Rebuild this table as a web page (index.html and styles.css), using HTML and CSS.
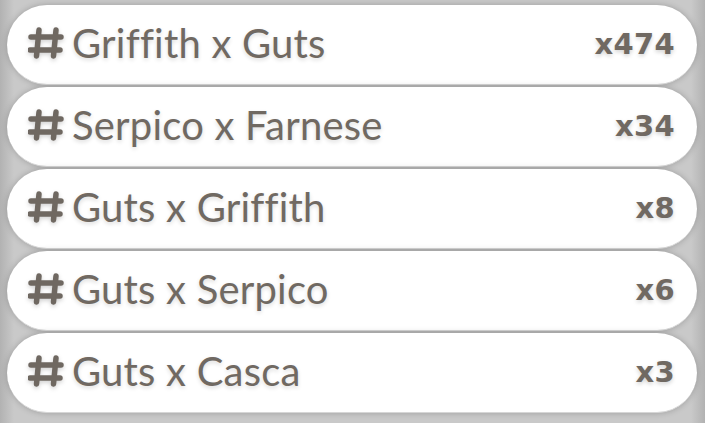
FILE: index.html
```html
<!DOCTYPE html>
<html>
<head>
<meta charset="utf-8">
<link rel="stylesheet" href="styles.css">
</head>
<body>
<ul class="tags">
  <li class="tag">
    <span class="name"><svg class="hash" viewBox="0 0 36 32"><path d="M11 3 L8.5 29 M28 3 L25.5 29 M3 10 L33 10 M2 23 L32 23"/></svg>Griffith x Guts</span>
    <span class="count">x474</span>
  </li>
  <li class="tag">
    <span class="name"><svg class="hash" viewBox="0 0 36 32"><path d="M11 3 L8.5 29 M28 3 L25.5 29 M3 10 L33 10 M2 23 L32 23"/></svg>Serpico x Farnese</span>
    <span class="count">x34</span>
  </li>
  <li class="tag">
    <span class="name"><svg class="hash" viewBox="0 0 36 32"><path d="M11 3 L8.5 29 M28 3 L25.5 29 M3 10 L33 10 M2 23 L32 23"/></svg>Guts x Griffith</span>
    <span class="count">x8</span>
  </li>
  <li class="tag">
    <span class="name"><svg class="hash" viewBox="0 0 36 32"><path d="M11 3 L8.5 29 M28 3 L25.5 29 M3 10 L33 10 M2 23 L32 23"/></svg>Guts x Serpico</span>
    <span class="count">x6</span>
  </li>
  <li class="tag">
    <span class="name"><svg class="hash" viewBox="0 0 36 32"><path d="M11 3 L8.5 29 M28 3 L25.5 29 M3 10 L33 10 M2 23 L32 23"/></svg>Guts x Casca</span>
    <span class="count">x3</span>
  </li>
</ul>
</body>
</html>
```
FILE: styles.css
```css
html, body {
  margin: 0;
  padding: 0;
}
body {
  width: 705px;
  height: 423px;
  overflow: hidden;
  background: linear-gradient(90deg, #b2b2b2 0px, #c9c9c9 14px, #c9c9c9 691px, #b2b2b2 705px);
  font-family: "Lato", "Open Sans", sans-serif;
  color: #706962;
}
.tags {
  list-style: none;
  margin: 0;
  padding: 5px 8px 0 7px;
  display: flex;
  flex-direction: column;
  gap: 2px;
}
.tag {
  height: 80px;
  background: #ffffff;
  border-radius: 40px;
  display: flex;
  align-items: center;
  justify-content: space-between;
  padding: 0 22px 0 21px;
  box-shadow: 0 0 6px rgba(0, 0, 0, 0.22);
  border-bottom: 1px solid #d6d6d6;
  box-sizing: border-box;
}
.name {
  display: flex;
  align-items: center;
  font-size: 40px;
  font-weight: 400;
  letter-spacing: 0.2px;
  font-variant-ligatures: none;
  text-shadow: 0 2px 4px rgba(0, 0, 0, 0.14);
  margin-top: -4px;
}
.hash {
  width: 36px;
  height: 32px;
  margin-right: 8px;
  fill: none;
  stroke: #6f6861;
  stroke-width: 5.5;
  stroke-linecap: round;
  filter: drop-shadow(0 2px 2px rgba(0, 0, 0, 0.18));
}
.count {
  font-family: "DejaVu Sans", sans-serif;
  font-weight: 700;
  font-size: 29px;
  letter-spacing: 0.3px;
  text-shadow: 0 2px 4px rgba(0, 0, 0, 0.18);
  margin-top: -2px;
}
```
